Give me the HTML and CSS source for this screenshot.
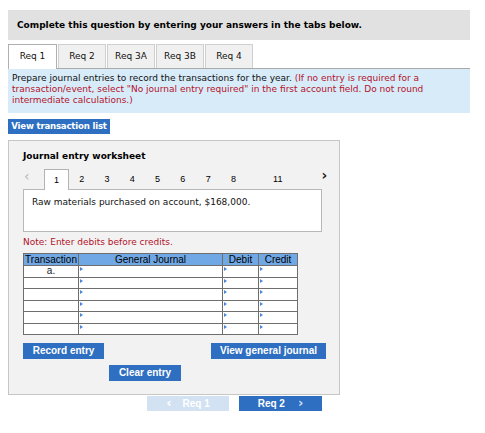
FILE: index.html
```html
<!DOCTYPE html>
<html>
<head>
<meta charset="utf-8">
<link rel="stylesheet" href="styles.css">
</head>
<body>
<div class="header">Complete this question by entering your answers in the tabs below.</div>
<div class="tabs">
  <div class="tab active">Req 1</div>
  <div class="tab">Req 2</div>
  <div class="tab">Req 3A</div>
  <div class="tab">Req 3B</div>
  <div class="tab">Req 4</div>
</div>
<div class="instructions">Prepare journal entries to record the transactions for the year. <span class="red">(If no entry is required for a<br>transaction/event, select "No journal entry required" in the first account field. Do not round<br>intermediate calculations.)</span></div>
<div class="btn-row-top"><button class="btn btn-view">View transaction list</button></div>
<div class="panel">
  <div class="panel-title">Journal entry worksheet</div>
  <div class="pager">
    <span class="arrow prev">&lsaquo;</span>
    <span class="page current">1</span>
    <span class="page">2</span>
    <span class="page">3</span>
    <span class="page">4</span>
    <span class="page">5</span>
    <span class="page">6</span>
    <span class="page">7</span>
    <span class="page">8</span>
    <span class="gap"></span>
    <span class="page">11</span>
    <span class="arrow next">&rsaquo;</span>
  </div>
  <div class="desc">Raw materials purchased on account, $168,000.</div>
  <div class="note">Note: Enter debits before credits.</div>
  <table class="journal">
    <thead>
      <tr><th class="c-tr">Transaction</th><th class="c-gj">General Journal</th><th class="c-dr">Debit</th><th class="c-cr">Credit</th></tr>
    </thead>
    <tbody>
      <tr><td class="t">a.</td><td class="m"></td><td class="m"></td><td class="m"></td></tr>
      <tr><td class="t"></td><td class="m"></td><td class="m"></td><td class="m"></td></tr>
      <tr><td class="t"></td><td class="m"></td><td class="m"></td><td class="m"></td></tr>
      <tr><td class="t"></td><td class="m"></td><td class="m"></td><td class="m"></td></tr>
      <tr><td class="t"></td><td class="m"></td><td class="m"></td><td class="m"></td></tr>
      <tr><td class="t"></td><td class="m"></td><td class="m"></td><td class="m"></td></tr>
    </tbody>
  </table>
  <div class="actions">
    <button class="btn btn-record">Record entry</button>
    <button class="btn btn-general">View general journal</button>
  </div>
  <div class="actions2">
    <button class="btn btn-clear">Clear entry</button>
  </div>
</div>
<div class="bottom-nav">
  <button class="btn nav-btn disabled"><span class="chev">&lsaquo;</span>Req 1</button>
  <button class="btn nav-btn">Req 2<span class="chev right">&rsaquo;</span></button>
</div>
</body>
</html>
```

FILE: styles.css
```css
body {
  margin: 8px;
  font-family: "DejaVu Sans", Verdana, sans-serif;
  font-size: 9px;
  color: #000;
  background: #fff;
}

.header {
  margin-top: 2px;
  width: 462px;
  height: 30px;
  line-height: 30px;
  background: #e1e1e1;
  font-weight: bold;
  padding-left: 9px;
  box-sizing: border-box;
}

.tabs {
  margin-top: 4px;
  width: 462px;
  height: 25px;
  display: flex;
  border-bottom: 1px solid #a9a9a9;
  box-sizing: border-box;
}

.tab {
  width: 48px;
  height: 24px;
  line-height: 23px;
  text-align: center;
  background: #f0f0f0;
  border: 1px solid #cfcfcf;
  border-bottom: none;
  box-sizing: border-box;
  margin-right: 1px;
  color: #111;
}

.tab.active {
  width: 49px;
  background: #fff;
  border-color: #b0b0b0;
  height: 25px;
}

.instructions {
  width: 462px;
  box-sizing: border-box;
  background: #d8ebf9;
  padding: 4px 4px 5px 4px;
  line-height: 11px;
  height: 44px;
  color: #111;
}

.red {
  color: #b3132b;
}

.btn-row-top {
  margin-top: 6px;
  height: 15px;
}

.btn {
  border: none;
  margin: 0;
  color: #fff;
  background: #2e6fc1;
  font-weight: bold;
  cursor: pointer;
  padding: 0;
  white-space: nowrap;
}

.btn-view {
  width: 102px;
  height: 15px;
  font-family: "DejaVu Sans", Verdana, sans-serif;
  font-size: 8.6px;
  letter-spacing: -0.2px;
  line-height: 15px;
  text-align: center;
}

.panel {
  margin-top: 6px;
  width: 332px;
  height: 255px;
  box-sizing: border-box;
  border: 1px solid #c6c6c6;
  background: #f2f2f2;
  padding: 10px 0 0 14px;
}

.panel-title {
  font-weight: bold;
  height: 11px;
  line-height: 11px;
}

.pager {
  margin-top: 7px;
  display: flex;
  height: 20px;
  align-items: stretch;
  font-family: "Liberation Sans", Arial, sans-serif;
  font-size: 9px;
  position: relative;
}

.arrow {
  font-family: "DejaVu Sans", sans-serif;
  font-size: 14px;
  line-height: 14px;
}

.prev {
  width: 20px;
  color: #b8b8b8;
  padding-left: 1px;
}

.next {
  margin-left: 31px;
  color: #222;
  font-weight: bold;
  line-height: 13px;
}

.page {
  width: 25.3px;
  text-align: center;
  line-height: 20px;
  box-sizing: border-box;
}

.page.current {
  width: 25px;
  background: #fff;
  border: 1px solid #b3b3b3;
  border-bottom: none;
  height: 21px;
  position: relative;
  z-index: 1;
}

.gap {
  width: 19px;
}

.desc {
  width: 299px;
  height: 43px;
  box-sizing: border-box;
  background: #fff;
  border: 1px solid #b8b8b8;
  padding: 6px 0 0 8px;
  line-height: 12px;
  color: #111;
}

.note {
  margin-top: 5px;
  color: #b3132b;
  line-height: 11px;
  height: 11px;
}

.journal {
  margin-top: 5px;
  border-collapse: collapse;
  font-family: "Liberation Sans", Arial, sans-serif;
  font-size: 10px;
  table-layout: fixed;
  width: 274px;
}

.journal th,
.journal td {
  border: 1px solid #6e6e6e;
  padding: 0;
  box-sizing: border-box;
}

.journal th {
  background: #70a8e5;
  height: 12px;
  line-height: 10px;
  font-weight: normal;
  color: #000;
  text-align: center;
}

.c-tr { width: 55px; }
.c-gj { width: 144px; }
.c-dr { width: 36px; }
.c-cr { width: 39px; }

.journal td {
  background: #fff;
  height: 11.5px;
  line-height: 9px;
}

.journal td.t {
  text-align: center;
  color: #222;
  vertical-align: top;
}

.journal td.m {
  position: relative;
}

.journal td.m::before {
  content: "";
  position: absolute;
  left: 1px;
  top: 1px;
  border-top: 2px solid transparent;
  border-bottom: 2px solid transparent;
  border-left: 3px solid #4a86d8;
}

.actions {
  margin-top: 8px;
  width: 303px;
  display: flex;
  justify-content: space-between;
}

.btn-record,
.btn-general,
.btn-clear,
.nav-btn {
  font-family: "Liberation Sans", Arial, sans-serif;
  font-size: 10px;
  height: 16px;
  line-height: 16px;
  text-align: center;
}

.btn-record { width: 81px; }
.btn-general { width: 115px; }

.actions2 {
  margin-top: 6px;
  padding-left: 86px;
}

.btn-clear { width: 72px; }

.bottom-nav {
  margin-top: 1px;
  padding-left: 139px;
  display: flex;
  gap: 10px;
}

.nav-btn {
  width: 83px;
  height: 15px;
  line-height: 15px;
}

.nav-btn.disabled {
  width: 82px;
  background: #d3e2f3;
  color: #fff;
}

.chev {
  font-family: "DejaVu Sans", sans-serif;
  font-size: 13px;
  font-weight: bold;
  margin-right: 11px;
  vertical-align: top;
  line-height: 14px;
}

.chev.right {
  margin-right: 0;
  margin-left: 13px;
  color: #cfe0f5;
}
```
